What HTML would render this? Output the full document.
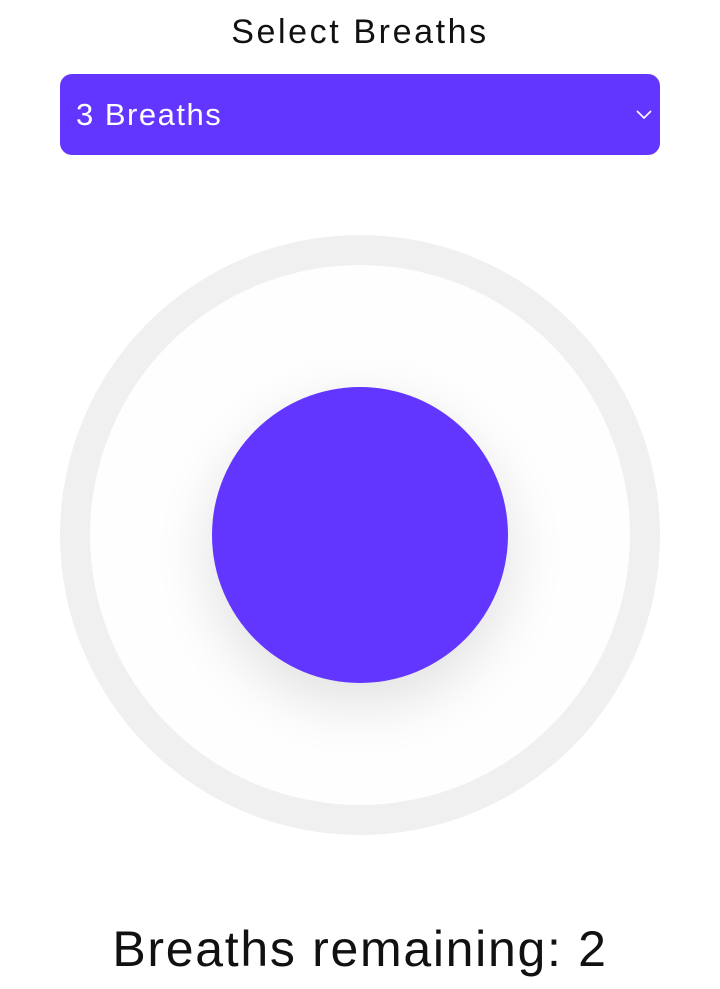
<!DOCTYPE html>
<html><head><style>
body{margin:0;width:720px;height:989px;background:#fff;font-family:"Liberation Sans",sans-serif;position:relative;overflow:hidden}
.t{position:absolute;top:13px;width:100%;text-align:center;font-size:34px;color:#111;letter-spacing:2.6px}
.sel{position:absolute;left:60px;top:74px;width:600px;height:81px;background:#6236ff;border-radius:12px;color:#fff;font-size:31px;box-sizing:border-box;padding:23px 16px;letter-spacing:1.5px}
.sel svg{position:absolute;right:8px;top:36px}
.ring{position:absolute;left:60px;top:235px;width:600px;height:600px;border-radius:50%;background:#f0f0f0}
.inner{position:absolute;left:90px;top:265px;width:540px;height:540px;border-radius:50%;background:#fefefe}
.dot{position:absolute;left:212px;top:387px;width:296px;height:296px;border-radius:50%;background:#6236ff;box-shadow:0 20px 60px rgba(0,0,0,0.12)}
.b{position:absolute;top:920px;width:100%;text-align:center;font-size:50px;color:#111;letter-spacing:1.7px}
</style></head><body>
<div class="t">Select Breaths</div>
<div class="sel">3 Breaths<svg width="16" height="10" viewBox="0 0 16 10"><path d="M1 1l7 7 7-7" fill="none" stroke="#fff" stroke-width="1.6"/></svg></div>
<div class="ring"></div><div class="inner"></div><div class="dot"></div>
<div class="b">Breaths remaining: 2</div>
</body></html>
